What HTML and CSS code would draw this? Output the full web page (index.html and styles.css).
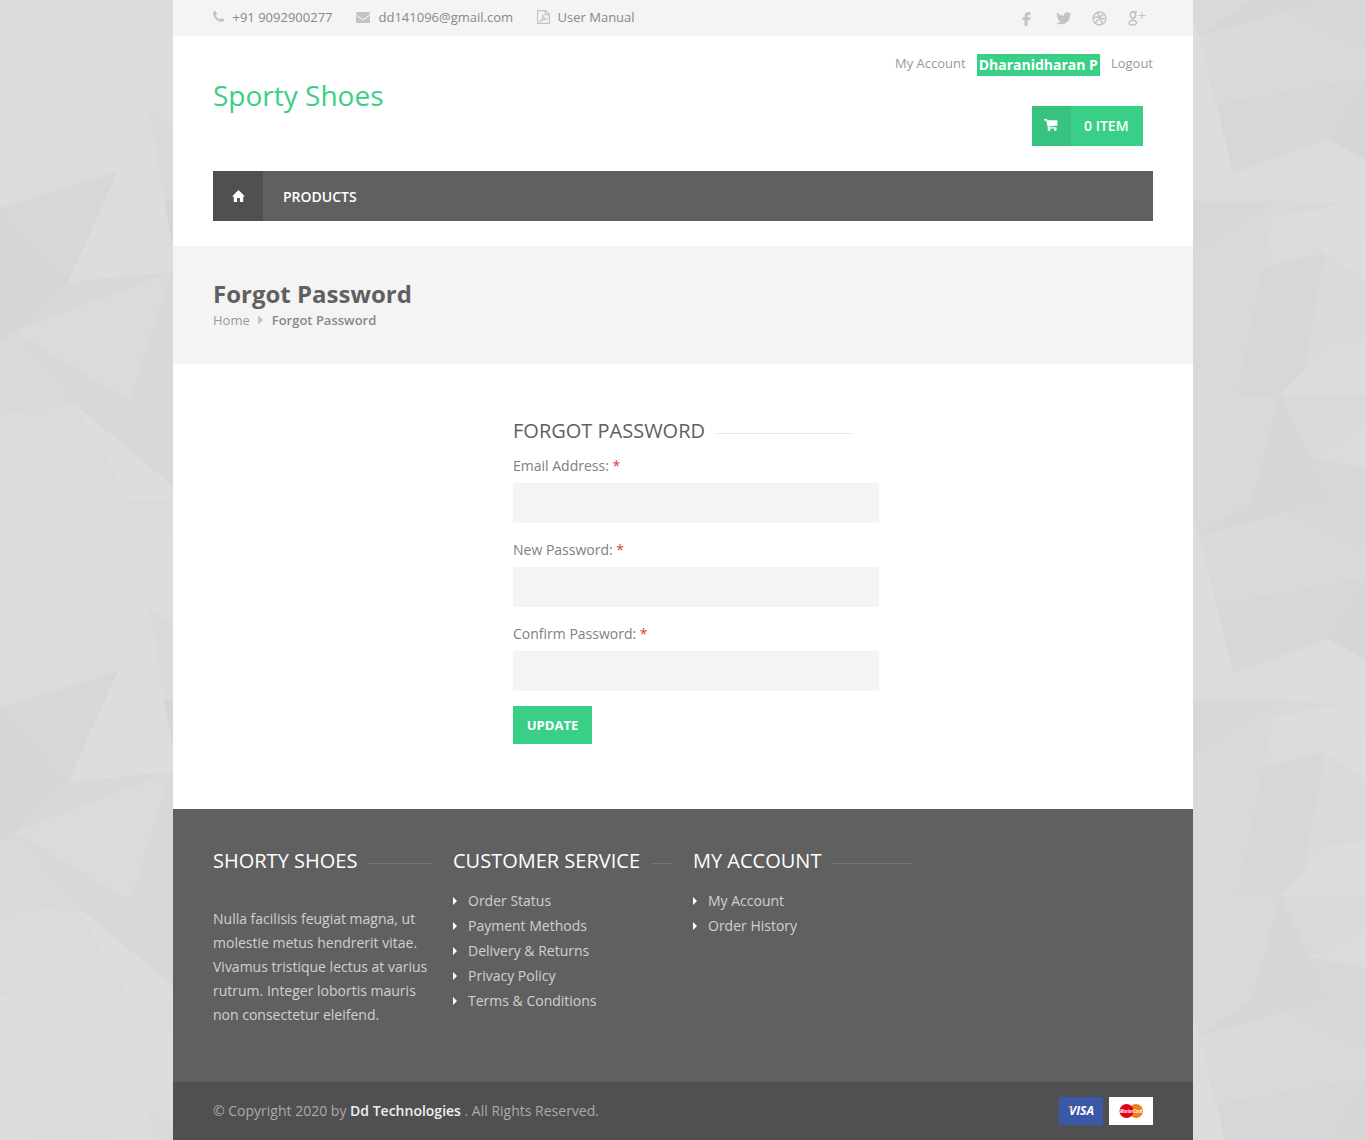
FILE: index.html
```
<!DOCTYPE html>
<html lang="en">
<head>
<meta charset="utf-8">
<title>Sporty Shoes - Forgot Password</title>
<link rel="stylesheet" href="styles.css">
</head>
<body>
<svg class="backdrop" width="1366" height="1140" aria-hidden="true">
  <defs>
    <pattern id="facets" width="1366" height="500" patternUnits="userSpaceOnUse">
      <rect width="1366" height="500" fill="#dbdedd"/>
      <path fill="#d9dcdb" d="M0 0L75 49L122 85L173 27V0zM0 414L75 404L173 486V500H0z"/>
      <path fill="#dbdedd" d="M0 0V10L75 49L70 46zM0 495V500H15zM75 404L173 486V500H130z"/>
      <path fill="#dadddc" d="M73 50L118 172L0 208z"/>
      <path fill="#dbdedd" d="M117 173L164 200L173 247V272L68 282z"/>
      <path fill="#d5d7d9" d="M0 191L117 158L68 258z"/>
      <path fill="#dadddc" d="M0 190V191L117 158V157z"/>
      <path fill="#d5d7d9" d="M0 208V191L117 158V173L68 282z"/>
      <path fill="#d4d7d6" d="M0 191L68 282L14 332L0 342z"/>
      <path fill="#d9dbdb" d="M149 107L173 125V200H164z"/>
      <path fill="#d3d5d6" d="M164 200H173V247z"/>
      <path fill="#d6d9d8" d="M68 282L171 272L14 332z"/>
      <path fill="#d9dbdd" d="M14 332L171 272L130 401z"/>
      <path fill="#d6d8da" d="M171 272H173V401H130z"/>
      <path fill="#d6d9d8" d="M14 332L130 401H173V486L75 404z"/>
      <path fill="#d7dad9" d="M0 342L14 332L75 404L0 414z"/>
      <path fill="#dadddc" d="M0 188L0 208L117 172V155z"/>
      <path fill="#d5d7d9" d="M0 208L117 172L68 282z"/>
      <path fill="#d4d7d6" d="M0 208L68 282L14 332L0 342z"/>
      <g transform="translate(1192 0)">
        <rect width="174" height="500" fill="#d7dad9"/>
        <path fill="#d4d7d6" d="M7 36L60 0H137L95 12zM88 395L118 457L137 500H60z"/>
        <path fill="#d5d7d9" d="M95 12L137 0H174V50zM118 457L174 469V500H137z"/>
        <path fill="#d8dadc" d="M7 36L95 12L26 104z"/>
        <path fill="#d5d7d9" d="M26 104L174 78L136 139L41 173z"/>
        <path fill="#d4d7d6" d="M174 78V160L136 139z"/>
        <path fill="#dbdedd" d="M0 14L7 36L41 173L0 145z"/>
        <path fill="#dadddc" d="M0 145L41 173L136 139L174 160V235L152 204L0 201z"/>
        <path fill="#d5d8d7" d="M0 201H82L0 256z"/>
        <path fill="#d7d9da" d="M82 201L150 204L80 217z"/>
        <path fill="#dbdedd" d="M80 217L152 204L174 235V280L133 253z"/>
        <path fill="#d9dcdb" d="M80 217L133 253L71 268z"/>
        <path fill="#d5d8d7" d="M71 268L133 253L112 370L88 395H45z"/>
        <path fill="#d8dadc" d="M133 253L174 280L136 345L112 370z"/>
        <path fill="#d8dbda" d="M157 269L174 280V342L136 345z"/>
        <path fill="#dadddc" d="M112 370L136 345L174 342V395H88z"/>
        <path fill="#d7d9db" d="M88 395H174V469L118 457z"/>
        <path fill="#d9dcdb" d="M118 457L174 425V469z"/>
        <path fill="#d7d9db" d="M0 320L45 395H0zM86 397L60 500L7 500V480z"/>
      </g>
    </pattern>
  </defs>
  <rect width="1366" height="1140" fill="url(#facets)"/>
</svg>

<div class="wrapper">
  <div class="topbar">
    <ul class="contacts">
      <li><svg class="i-phone" width="11" height="11" viewBox="192 128 1408 1408"><path d="M1600 1240q0 27-10 70.5t-21 68.5q-21 50-122 106-94 51-186 51-27 0-52.5-3.5t-57.500-12.500-47.500-14.500-55.500-20.500-49-18q-98-35-175-83-128-79-264.500-215.500t-215.500-264.500q-48-77-83-175-3-9-18-49t-20.500-55.500-14.500-47.500-12.500-57.500-3.500-52.500q0-92 51-186 56-101 106-122 25-11 68.500-21t70.500-10q14 0 21 3 18 6 53 76 11 19 30 54t35 63.500 31 53.500q3 4 17.500 25t21.500 35.500 7 28.500q0 20-28.500 50t-62 55-62 53-28.500 46q0 9 5 22.500t8.500 20.500 14 24 11.500 19q76 137 174 235t235 174q2 1 19 11.500t24 14 20.500 8.500 22.500 5q18 0 46-28.500t53-62 55-62 50-28.500q14 0 28.500 7t35.500 21.500 25 17.500q25 15 53.500 31t63.500 35 54 30q70 35 76 53 3 7 3 21z"/></svg>+91 9092900277</li>
      <li><svg class="i-mail" width="14" height="11" viewBox="0 256 1792 1408" preserveAspectRatio="none"><path d="M1792 710v794q0 66-47 113t-113 47h-1472q-66 0-113-47t-47-113v-794q44 49 101 87 362 246 497 345 57 42 92.500 65.500t94.500 48 110 24.500h2q51 0 110-24.500t94.500-48 92.500-65.500q170-123 498-345 57-39 100-87zm0-294q0 79-49 151t-122 123q-376 261-468 325-10 7-42.500 31t-54 38.500-52 32.500-57.500 27-50 9h-2q-23 0-50-9t-57.500-27-52-32.500-54-38.500-42.500-31q-91-64-262-182.500t-205-142.500q-62-42-117-115.500t-55-136.500q0-78 41.500-130t118.500-52h1472q65 0 112.500 47t47.500 113z"/></svg>dd141096@gmail.com</li>
      <li><svg class="i-pdf" width="13" height="14" viewBox="0 0 13 14"><path fill="none" stroke="#c3c3c3" stroke-width="1.200" d="M.6.6H8.500L12.400 4.500V13.400H.6zM8.300.6V4.700H12.400M2.500 11.800C4.500 10.800 6 8 5.800 4.600C5.800 7.500 7.800 9.300 10.600 9.400C8 8.700 5 9.500 2.500 11.800"/></svg>User Manual</li>
    </ul>
    <div class="social">
      <svg width="9" height="14" viewBox="0 0 9 14"><path d="M8.500.2V3H6.700C5.900 3 5.600 3.400 5.600 4.200V5.200H8.500L8.200 8H5.600V14H2.600V8H.5V5.200H2.600V3.700C2.600 1.300 3.800.2 6 .2z"/></svg>
      <svg width="16" height="13" viewBox="0 0 16 13"><path d="M15.500 1.700C15 2 14.400 2.200 13.800 2.200C14.400 1.800 14.900 1.200 15.100.5C14.500.9 13.900 1.100 13.200 1.200C11.200-.9 7.700.5 8 3.800C5.300 3.700 2.900 2.400 1.300.4C.4 2 .9 3.700 2.300 4.700C1.700 4.700 1.200 4.500.8 4.300C.8 5.800 1.900 7.100 3.300 7.400C2.800 7.500 2.300 7.500 1.900 7.400C2.300 8.700 3.400 9.500 4.800 9.500C3.500 10.600 1.900 11 .2 10.900C6.600 14.700 14 10.700 13.900 3.500C14.600 3 15.100 2.400 15.500 1.700z"/></svg>
      <svg width="15" height="15" viewBox="0 0 15 15"><g fill="none" stroke="#c3c3c3" stroke-width="1.400"><circle cx="7.500" cy="7.500" r="6.500"/><path d="M5 1.500C7.500 4.500 9.300 8.500 10.300 13.200M1 6.500C5.500 6.700 9.500 5.700 12 2.800M3.300 12.200C5 8.500 9 6.800 14 8"/></g></svg>
      <svg width="18" height="15" viewBox="0 0 18 15"><g fill="none" stroke="#c3c3c3"><ellipse cx="4.900" cy="3.900" rx="2.600" ry="3.100" stroke-width="1.700"/><path stroke-width="1.500" d="M5 1H9M6.200 7C4 8 4.500 8.800 6.500 9.500C10 10.900 8.600 14 4.600 14C.8 14 0 11.400 2.300 10.200C3.500 9.600 4.900 9.600 6 9.400"/><path d="M10.500 4.500H17.500M14 1V8"/></g></svg>
    </div>
  </div>

  <header class="header">
    <div class="brand">Sporty Shoes</div>
    <div class="account">
      <div class="account-links"><span>My Account</span><strong>Dharanidharan P</strong><span>Logout</span></div>
      <div class="cart">
        <span class="cart-icon"><svg width="14" height="12" viewBox="0 0 14 12"><path fill="#fff" d="M0 0H3L3.400 1.300H13.400V6.500L5.100 7.600L5.300 8.300H12.400V9.500H4L2.200 1.500H0z"/><circle cx="5" cy="10.500" r="1.400" fill="#fff"/><circle cx="11.300" cy="10.500" r="1.400" fill="#fff"/></svg></span>
        <span class="cart-label">0 ITEM</span>
      </div>
    </div>
  </header>

  <nav class="nav">
    <span class="nav-home"><svg width="13" height="12" viewBox="0 0 13 12"><path fill="#fff" d="M6.500 0L13 6.500H11.200V12H7.900V8H5.100V12H1.800V6.500H0z"/></svg></span>
    <span class="nav-item">PRODUCTS</span>
  </nav>

  <section class="page-title">
    <h1>Forgot Password</h1>
    <div class="crumbs"><span>Home</span><svg width="5" height="8" viewBox="0 0 5 8"><path fill="#c3c3c3" d="M0 0H1L5 4L1 8H0z"/></svg><strong>Forgot Password</strong></div>
  </section>

  <main class="main">
    <form class="form">
      <h2 class="ruled">FORGOT PASSWORD</h2>
      <label for="email">Email Address: <em>*</em></label>
      <input id="email" type="text">
      <label for="pw">New Password: <em>*</em></label>
      <input id="pw" type="password">
      <label for="pw2">Confirm Password: <em>*</em></label>
      <input id="pw2" type="password">
      <button type="button">UPDATE</button>
    </form>
  </main>

  <footer>
    <div class="footer-cols">
      <div class="col">
        <h3 class="ruled">SHORTY SHOES</h3>
        <p>Nulla facilisis feugiat magna, ut<br>molestie metus hendrerit vitae.<br>Vivamus tristique lectus at varius<br>rutrum. Integer lobortis mauris<br>non consectetur eleifend.</p>
      </div>
      <div class="col">
        <h3 class="ruled">CUSTOMER SERVICE</h3>
        <ul><li>Order Status</li><li>Payment Methods</li><li>Delivery &amp; Returns</li><li>Privacy Policy</li><li>Terms &amp; Conditions</li></ul>
      </div>
      <div class="col">
        <h3 class="ruled">MY ACCOUNT</h3>
        <ul><li>My Account</li><li>Order History</li></ul>
      </div>
    </div>
    <div class="footer-bottom">
      <span>© Copyright 2020 by <strong>Dd Technologies</strong> . All Rights Reserved.</span>
      <div class="cards">
        <svg width="44" height="28" viewBox="0 0 44 28"><rect width="44" height="28" fill="#3a58a7"/><text x="10" y="18" class="visa" textLength="25" lengthAdjust="spacingAndGlyphs">VISA</text><path fill="#f0a43a" d="M8.500 9.500H12.300L13 13.500Q11.800 10.800 8.500 9.500z"/></svg>
        <svg width="44" height="28" viewBox="0 0 44 28"><rect width="44" height="28" fill="#fff"/><circle cx="27" cy="14" r="7" fill="#ef7f1a"/><circle cx="17.500" cy="14" r="7" fill="#e2001a"/><text x="11" y="16" class="mc" textLength="22" lengthAdjust="spacingAndGlyphs">MasterCard</text></svg>
      </div>
    </div>
  </footer>
</div>
</body>
</html>
```
FILE: styles.css
```
* { box-sizing: border-box; }
body {
  margin: 0;
  background: #dadddc;
  color: #7f7f7f;
  font: 14px/24px "Open Sans", "Noto Sans", sans-serif;
}
svg { display: block; flex: none; }
ul { list-style: none; margin: 0; padding: 0; }
h1, h2, h3, p { margin: 0; }
.backdrop { position: absolute; left: 0; top: 0; z-index: -1; }
.wrapper {
  width: 1020px;
  height: 1140px;
  margin: 0 auto;
  background: #fff;
  display: flex;
  flex-direction: column;
}
.topbar {
  height: 36px;
  padding: 0 40px;
  background: #f4f4f4;
  display: flex;
  justify-content: space-between;
  font-size: 13px;
  line-height: 34px;
  color: #888;
}
.topbar svg { fill: #c3c3c3; }
.contacts { display: flex; gap: 23.500px; }
.contacts li { display: flex; align-items: flex-start; gap: 8.500px; }
.contacts li:last-child { gap: 8px; }
.i-phone { margin-top: 11px; }
.i-mail { margin-top: 12px; }
.i-pdf { margin-top: 10px; }
.social { display: flex; gap: 21px; padding: 11px 7px 0 0; }
.social svg:first-child { margin: 1px 4px 0 0; }
.social svg:nth-child(2) { margin: 1px -1px 0 0; }
.header { height: 135px; padding: 0 40px; display: flex; justify-content: space-between; }
.brand { margin-top: 39px; color: #3acf87; font-size: 28px; line-height: 40px; }
.account { display: flex; flex-direction: column; align-items: flex-end; padding-top: 18px; }
.account-links { display: flex; gap: 11px; font-size: 13px; line-height: 18px; color: #999; }
.account-links strong { height: 22px; padding: 0 2px; background: #3acf87; color: #fff; font-size: 14px; line-height: 22px; }
.cart { display: flex; width: 111px; height: 40px; margin: 30px 10px 0 0; background: #3acf87; }
.cart-icon { width: 39px; padding: 13px 0 0 12px; background: #38c280; }
.cart-label { padding-left: 13px; color: #fff; font-weight: 600; line-height: 40px; }
.nav { height: 50px; margin: 0 40px 25px; display: flex; background: #606060; }
.nav-home { width: 50px; padding: 19px 0 0 19px; background: #505050; }
.nav-item { padding-left: 20px; color: #fff; font-weight: 600; line-height: 52px; }
.page-title { height: 118px; padding: 31px 40px 0; background: #f4f4f4; }
.page-title h1 { margin-bottom: 1px; color: #606060; font-size: 24px; line-height: 33px; font-weight: 700; }
.crumbs { display: flex; align-items: center; gap: 8.500px; font-size: 13px; line-height: 18px; color: #999; }
.crumbs strong { font-weight: 600; color: #888; }
.main { height: 445px; padding: 53px 0 0 340px; }
.form { width: 366px; display: flex; flex-direction: column; align-items: flex-start; }
.ruled { display: flex; align-items: center; gap: 10px; font-size: 20px; line-height: 28px; font-weight: 400; }
.ruled::after { content: ""; flex: 1; height: 1px; margin-top: 5px; background: #e8e8e8; }
.form h2 { width: 340px; margin-bottom: 9px; color: #606060; }
.form label { margin-bottom: 5px; }
.form em { color: #d9403a; font-style: normal; }
.form input { width: 366px; height: 40px; margin: 0 0 15px; padding: 0 12px; border: 0; background: #f4f4f4; }
.form button { width: 79px; height: 38px; padding: 0; border: 0; background: #3acf87; color: #fff; font: 700 13px/38px "Open Sans", sans-serif; }
footer { color: #d0d0d0; }
.footer-cols { height: 273px; padding: 38px 40px 0; display: flex; gap: 20px; background: #606060; }
.col { width: 220px; }
.col h3 { color: #fff; }
.col .ruled { gap: 10.500px; }
.col .ruled::after { background: #747474; }
.col p { margin-top: 32px; white-space: nowrap; }
.col ul { margin-top: 13px; line-height: 25px; }
.col li { display: flex; align-items: center; gap: 11px; }
.col li::before { content: ""; border: solid transparent; border-width: 4px 0 4px 4px; border-left-color: #fff; }
.footer-bottom { height: 58px; padding: 0 40px; display: flex; justify-content: space-between; align-items: center; background: #505050; color: #aaa; }
.footer-bottom strong { color: #eee; font-weight: 600; }
.cards { display: flex; gap: 6px; }
.visa { fill: #fff; font: italic 700 12px "Open Sans", sans-serif; }
.mc { fill: #fff; font: italic 700 5px "Open Sans", sans-serif; }
```
